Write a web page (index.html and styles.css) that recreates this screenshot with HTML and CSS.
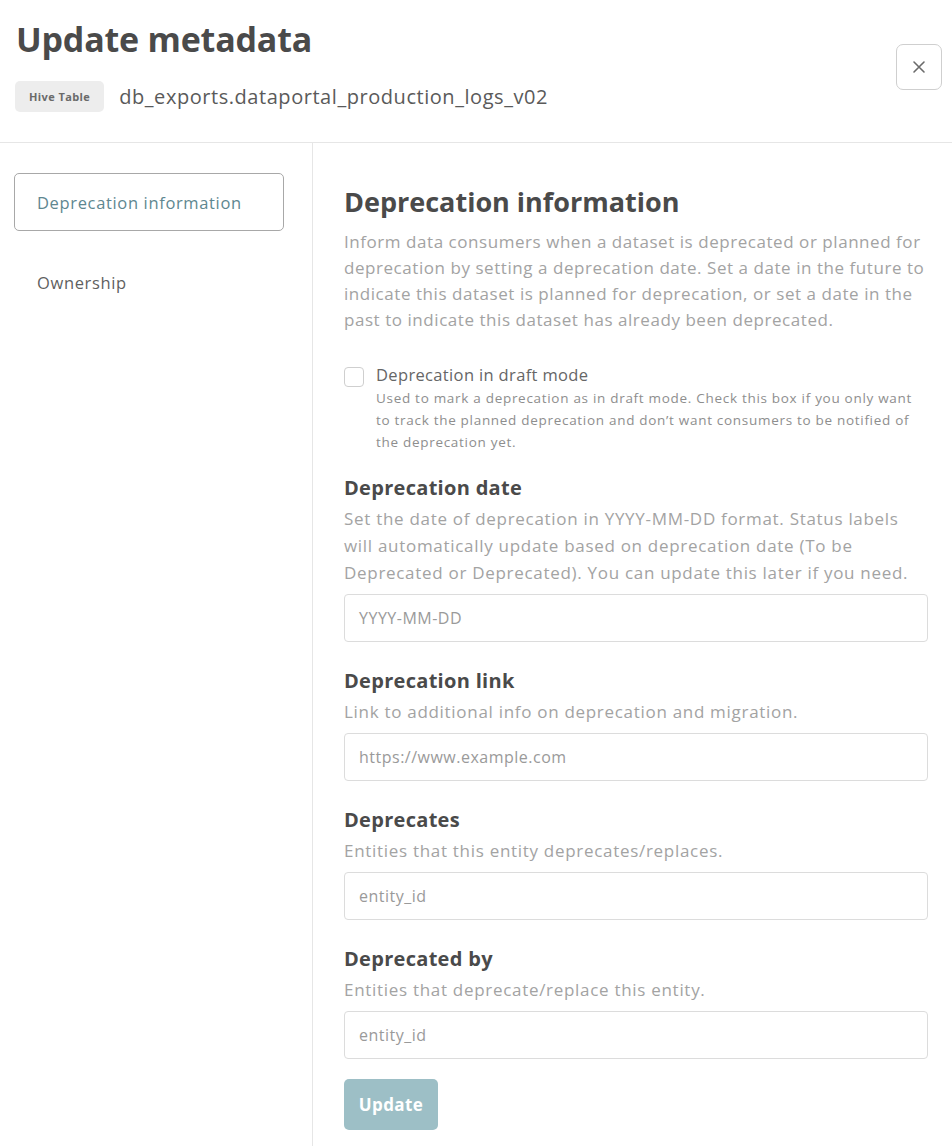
FILE: index.html
```html
<!DOCTYPE html>
<html lang="en">
<head>
<meta charset="utf-8">
<title>Update metadata</title>
<link rel="stylesheet" href="styles.css">
</head>
<body>
<div class="modal">
  <header class="header">
    <div class="header-text">
      <h1 class="title">Update metadata</h1>
      <div class="subtitle">
        <span class="badge">Hive Table</span>
        <span class="entity">db_exports.dataportal_production_logs_v02</span>
      </div>
    </div>
    <button class="close" aria-label="Close">
      <svg width="16" height="16" viewBox="0 0 16 16"><path d="M3 3 L13 13 M13 3 L3 13" stroke="#6b6b6b" stroke-width="1.6" stroke-linecap="round" fill="none"/></svg>
    </button>
  </header>
  <div class="body">
    <nav class="nav">
      <div class="nav-item active">Deprecation information</div>
      <div class="nav-item">Ownership</div>
    </nav>
    <main class="main">
      <h2 class="section-title">Deprecation information</h2>
      <p class="section-desc">Inform data consumers when a dataset is deprecated or planned for deprecation by setting a deprecation date. Set a date in the future to indicate this dataset is planned for deprecation, or set a date in the past to indicate this dataset has already been deprecated.</p>

      <div class="check-row">
        <span class="checkbox"></span>
        <div class="check-text">
          <div class="check-label">Deprecation in draft mode</div>
          <div class="check-help">Used to mark a deprecation as in draft mode. Check this box if you only want to track the planned deprecation and don’t want consumers to be notified of the deprecation yet.</div>
        </div>
      </div>

      <div class="field">
        <h3 class="field-title">Deprecation date</h3>
        <p class="field-desc">Set the date of deprecation in YYYY-MM-DD format. Status labels will automatically update based on deprecation date (To be Deprecated or Deprecated). You can update this later if you need.</p>
        <div class="input">YYYY-MM-DD</div>
      </div>

      <div class="field">
        <h3 class="field-title">Deprecation link</h3>
        <p class="field-desc">Link to additional info on deprecation and migration.</p>
        <div class="input">https://www.example.com</div>
      </div>

      <div class="field">
        <h3 class="field-title">Deprecates</h3>
        <p class="field-desc">Entities that this entity deprecates/replaces.</p>
        <div class="input">entity_id</div>
      </div>

      <div class="field">
        <h3 class="field-title">Deprecated by</h3>
        <p class="field-desc">Entities that deprecate/replace this entity.</p>
        <div class="input">entity_id</div>
      </div>

      <button class="update">Update</button>
    </main>
  </div>
</div>
</body>
</html>
```
FILE: styles.css
```css
html, body {
  margin: 0;
  padding: 0;
  background: #ffffff;
}
body {
  font-family: "Open Sans", "Noto Sans", "Liberation Sans", sans-serif;
  color: #484848;
}
.modal {
  width: 952px;
  height: 1146px;
  overflow: hidden;
}
.header {
  display: flex;
  justify-content: space-between;
  align-items: flex-start;
  height: 142px;
  padding: 0 10px 0 16px;
  border-bottom: 1px solid #e6e6e6;
}
.title {
  margin: 17px 0 0 0;
  font-size: 34px;
  line-height: 44px;
  font-weight: 700;
  color: #4a4a4a;
  letter-spacing: -0.2px;
}
.subtitle {
  display: flex;
  align-items: center;
  margin-top: 20px;
  margin-left: -1px;
}
.badge {
  display: inline-flex;
  align-items: center;
  height: 31px;
  padding: 0 14px;
  background: #ededed;
  border-radius: 5px;
  font-size: 11px;
  font-weight: 700;
  letter-spacing: 0.4px;
  color: #6a6a6a;
}
.entity {
  margin-left: 15px;
  font-size: 20px;
  letter-spacing: 0.55px;
  color: #5a5a5a;
}
.close {
  margin-top: 44px;
  width: 46px;
  height: 46px;
  display: flex;
  align-items: center;
  justify-content: center;
  background: #fff;
  border: 1.5px solid #cfcfcf;
  border-radius: 7px;
  padding: 0;
}
.body {
  display: grid;
  grid-template-columns: 313px 1fr;
  height: 1003px;
}
.nav {
  border-right: 1px solid #e6e6e6;
  padding: 30px 28px 0 14px;
  display: flex;
  flex-direction: column;
  gap: 22px;
}
.nav-item {
  height: 58px;
  display: flex;
  align-items: center;
  padding-left: 23px;
  font-size: 16.5px;
  letter-spacing: 0.65px;
  color: #5f5f5f;
  box-sizing: border-box;
}
.nav-item.active {
  border: 1.5px solid #a8a8a8;
  border-radius: 5px;
  color: #5e8790;
  padding-left: 22px;
}
.main {
  padding: 42px 24px 0 31px;
}
.section-title {
  margin: 0;
  font-size: 27px;
  line-height: 34px;
  font-weight: 700;
  color: #4a4a4a;
}
.section-desc {
  margin: 10px 0 0 0;
  font-size: 17px;
  line-height: 26px;
  letter-spacing: 0.55px;
  color: #a3a3a3;
}
.check-row {
  display: flex;
  margin-top: 30px;
}
.checkbox {
  flex: none;
  width: 18px;
  height: 18px;
  margin-top: 4px;
  border: 1.5px solid #cfcfcf;
  border-radius: 4px;
  margin-right: 12px;
}
.check-label {
  font-size: 16.5px;
  line-height: 24px;
  letter-spacing: 0.35px;
  color: #666666;
}
.check-help {
  font-size: 13.5px;
  line-height: 22px;
  letter-spacing: 0.7px;
  color: #8e8e8e;
}
.field {
  margin-top: 22px;
}
.field + .field {
  margin-top: 26px;
}
.field-title {
  margin: 0;
  font-size: 20px;
  line-height: 26px;
  font-weight: 700;
  color: #4a4a4a;
  letter-spacing: 0.3px;
}
.field-desc {
  margin: 4px 0 0 0;
  font-size: 17px;
  line-height: 27px;
  letter-spacing: 0.7px;
  color: #a3a3a3;
}
.input {
  margin-top: 8px;
  height: 48px;
  box-sizing: border-box;
  border: 1.5px solid #dcdcdc;
  border-radius: 4px;
  display: flex;
  align-items: center;
  padding-left: 14px;
  font-size: 16px;
  letter-spacing: 0.5px;
  color: #9a9a9a;
}
.update {
  margin-top: 20px;
  width: 94px;
  height: 51px;
  border: none;
  border-radius: 5px;
  background: #9dbfc6;
  color: #ffffff;
  font-family: inherit;
  font-size: 17px;
  letter-spacing: 0.4px;
  font-weight: 700;
}
```
